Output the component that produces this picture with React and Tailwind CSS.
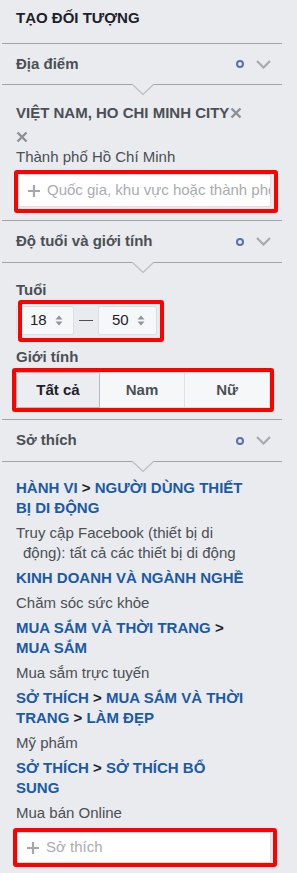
import React from 'react';

const font = "font-['Liberation_Sans',Arial,sans-serif]";

function Divider({ notch }) {
  return (
    <div className="relative h-px bg-[#a0a3a8]">
      {notch && (
        <svg className="absolute left-[129px] top-0" width="24" height="12" viewBox="0 0 24 12">
          <polyline points="1,0 12,10.5 23,0" fill="#e9ebee" stroke="#b9bcc1" strokeWidth="1.2" />
        </svg>
      )}
    </div>
  );
}

function SectionHeader({ title, h }) {
  return (
    <div className={`flex items-center justify-between pl-[14px] pr-[11px] ${h}`}>
      <span className="text-[15px] font-bold text-[#4b4f56]">{title}</span>
      <div className="flex items-center gap-[12px]">
        <span className="block h-[8px] w-[8px] rounded-full border-2 border-[#5872ab]" />
        <svg width="15" height="9" viewBox="0 0 15 9">
          <polyline points="1,1 7.5,7.5 14,1" fill="none" stroke="#a7aab0" strokeWidth="2.2" />
        </svg>
      </div>
    </div>
  );
}

function XIcon() {
  return (
    <svg width="12" height="12" viewBox="0 0 12 12">
      <path d="M1.5 1.5 L10.5 10.5 M10.5 1.5 L1.5 10.5" stroke="#8d9096" strokeWidth="2.4" />
    </svg>
  );
}

function AddInput({ placeholder, h }) {
  return (
    <div className={`flex items-center overflow-hidden border border-[#dddfe2] bg-white pl-[9px] ${h}`}>
      <svg className="shrink-0" width="12" height="12" viewBox="0 0 12 12">
        <path d="M6 0 V12 M0 6 H12" stroke="#a4a7ac" strokeWidth="2.2" />
      </svg>
      <span className="ml-[7px] whitespace-nowrap text-[15px] text-[#a9acb1]">{placeholder}</span>
    </div>
  );
}

function Spinner() {
  return (
    <svg width="8" height="11" viewBox="0 0 8 11">
      <polygon points="4,0.5 7.5,4.5 0.5,4.5" fill="#90949c" />
      <polygon points="0.5,6.5 7.5,6.5 4,10.5" fill="#90949c" />
    </svg>
  );
}

function AgeSelect({ value }) {
  return (
    <div className="flex h-[29px] items-center rounded-[2px] border border-[#dddfe2] bg-[#f6f7f9] pl-[13px]">
      <span className="w-[25px] text-[15px] text-[#1d2129]">{value}</span>
      <Spinner />
    </div>
  );
}

// each heading line is a list of segments, '>' between them
const interests = [
  { path: [['HÀNH VI', 'NGƯỜI DÙNG THIẾT'], ['BỊ DI ĐỘNG']], lines: ['Truy cập Facebook (thiết bị di', 'động): tất cả các thiết bị di động'] },
  { path: [['KINH DOANH VÀ NGÀNH NGHỀ']], lines: ['Chăm sóc sức khỏe'] },
  { path: [['MUA SẮM VÀ THỜI TRANG', ''], ['MUA SẮM']], lines: ['Mua sắm trực tuyến'] },
  { path: [['SỞ THÍCH', 'MUA SẮM VÀ THỜI'], ['TRANG', 'LÀM ĐẸP']], lines: ['Mỹ phẩm'] },
  { path: [['SỞ THÍCH', 'SỞ THÍCH BỔ'], ['SUNG']], lines: ['Mua bán Online'] },
];

export default function App() {
  return (
    <div className={`min-h-[873px] w-[297px] bg-[#e9ebee] ${font}`}>
      <div className="ml-[2px] w-[280px]">
        <div className="h-[43px] pl-[14px] pt-[8px] text-[15px] font-bold leading-[20px] text-[#1d2129]">
          TẠO ĐỐI TƯỢNG
        </div>
        <Divider />
        <SectionHeader title="Địa điểm" h="h-[40px]" />
        <Divider notch />

        {/* location */}
        <div className="pt-[18px]">
          <div className="flex items-center pl-[14px] text-[15px] font-bold leading-[20px] text-[#4b4f56]">
            VIỆT NAM, HO CHI MINH CITY
            <span className="ml-[1px] flex items-center"><XIcon /></span>
          </div>
          <div className="mt-[4px] flex h-[20px] items-center pl-[14px]">
            <XIcon />
          </div>
          <div className="pl-[14px] text-[15px] leading-[20px] text-[#4b4f56]">Thành phố Hồ Chí Minh</div>
          <div className="ml-[12px] mt-[3px] w-[264px] rounded-[3px] border-4 border-[#ff0000] pb-[2px] pr-[3px]">
            <AddInput placeholder="Quốc gia, khu vực hoặc thành phố" h="h-[33px]" />
          </div>
        </div>

        <div className="mt-[7px]"><Divider /></div>
        <SectionHeader title="Độ tuổi và giới tính" h="h-[41px]" />
        <Divider notch />

        {/* age & gender */}
        <div className="pt-[17px]">
          <div className="pl-[14px] text-[15px] font-semibold leading-[20px] text-[#4b4f56]">Tuổi</div>
          <div className="relative ml-[14px] mt-[6px] flex w-[141px] items-center">
            <div className="w-[58px]"><AgeSelect value="18" /></div>
            <div className="mx-[5px] h-px w-[14px] bg-[#4b4f56]" />
            <div className="w-[59px]"><AgeSelect value="50" /></div>
            <div className="absolute left-[2px] top-[-6px] h-[42px] w-[146px] rounded-[3px] border-4 border-[#ff0000]" />
          </div>
          <div className="mt-[12px] pl-[14px] text-[15px] font-semibold leading-[20px] text-[#4b4f56]">Giới tính</div>
          <div className="ml-[10px] mt-[1px] w-[262px] rounded-[3px] border-4 border-[#ff0000]">
            <div className="flex h-[36px] text-[15px] font-bold">
              <div className="flex w-[84px] items-center justify-center rounded-l-[2px] border border-[#b7bbc1] bg-[#ebedf0] text-[#1d2129]">Tất cả</div>
              <div className="flex w-[85px] items-center justify-center border-y border-r border-[#dddfe2] bg-[#f6f7f9] text-[#4b4f56]">Nam</div>
              <div className="flex w-[85px] items-center justify-center rounded-r-[2px] border-y border-r border-[#dddfe2] bg-[#f6f7f9] text-[#4b4f56]">Nữ</div>
            </div>
          </div>
        </div>

        <div className="mt-[7px]"><Divider /></div>
        <SectionHeader title="Sở thích" h="h-[41px]" />
        <Divider notch />

        {/* interests */}
        <div className="pt-[16px]">
          <div className="flex flex-col gap-[5px] whitespace-nowrap pl-[14px] text-[15px] leading-[20px]">
            {interests.map((item, i) => (
              <React.Fragment key={i}>
                <div className="font-bold text-[#1c5aa6]">
                  {item.path.map((line, k) => (
                    <div key={k}>
                      {line.map((p, j) => (
                        <React.Fragment key={j}>
                          {j > 0 && <span className="text-[#1d2129]"> &gt; </span>}
                          {p}
                        </React.Fragment>
                      ))}
                    </div>
                  ))}
                </div>
                <div className="text-[#4b4f56]">
                  {item.lines.map((l, j) => (
                    <div key={j} className={j > 0 ? 'pl-[7px]' : ''}>{l}</div>
                  ))}
                </div>
              </React.Fragment>
            ))}
          </div>
          <div className="ml-[11px] mt-[5px] w-[264px] rounded-[3px] border-4 border-[#ff0000] pr-[2px]">
            <AddInput placeholder="Sở thích" h="h-[31px]" />
          </div>
        </div>
      </div>
    </div>
  );
}
